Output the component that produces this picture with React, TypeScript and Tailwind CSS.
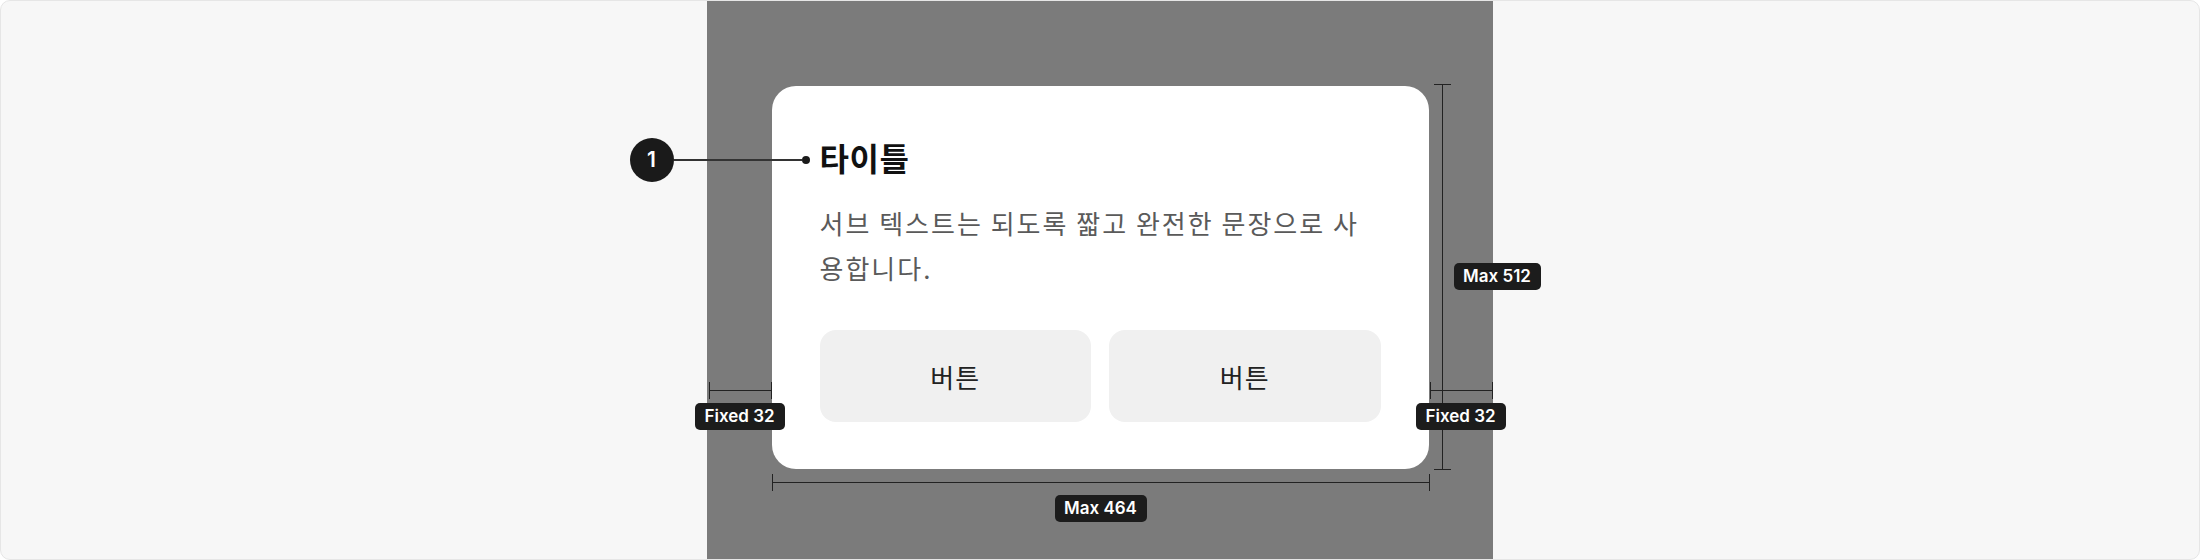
import type { ReactNode } from "react";

/* ------------------------------------------------------------------ */
/* SPEC PIECES                                                         */
/* ------------------------------------------------------------------ */

function SpecLabel({ children, className }: { children: ReactNode; className: string }) {
  return (
    <div
      className={`absolute flex items-center justify-center rounded-[5px] bg-[#1c1c1c] text-[17px] font-semibold leading-none text-white font-['Inter',sans-serif] ${className}`}
    >
      {children}
    </div>
  );
}

// horizontal dimension line with end caps
function HRule({ className }: { className: string }) {
  return (
    <div className={`absolute flex h-[17px] items-center ${className}`}>
      <div className="h-full w-px bg-[#222]" />
      <div className="h-px flex-1 bg-[#222]" />
      <div className="h-full w-px bg-[#222]" />
    </div>
  );
}

// vertical dimension line with end caps
function VRule({ className }: { className: string }) {
  return (
    <div className={`absolute flex w-[17px] flex-col items-center ${className}`}>
      <div className="h-px w-full bg-[#222]" />
      <div className="w-px flex-1 bg-[#222]" />
      <div className="h-px w-full bg-[#222]" />
    </div>
  );
}

/* ------------------------------------------------------------------ */
/* PAGE                                                                */
/* ------------------------------------------------------------------ */

export default function App() {
  return (
    <div className="flex h-[560px] w-[2200px] justify-center overflow-hidden rounded-[10px] border border-[#e6e6e6] bg-[#f7f7f7]">
      {/* Dimmed backdrop */}
      <div className="flex h-full w-[786px] justify-center bg-[#7b7b7b] pt-[85px]">
        {/* Dialog */}
        <div className="relative h-[383px] w-[657px] rounded-[24px] bg-white px-[48px] pt-[45px] font-['Noto_Sans_CJK_KR',sans-serif]">
          <h2 className="text-[32px] font-bold leading-[52px] tracking-[0.5px] text-[#111]">타이틀</h2>
          <p className="mt-[17px] text-[26px] leading-[45px] tracking-[2px] text-[#5a5a5a]">
            서브 텍스트는 되도록 짧고 완전한 문장으로 사용합니다.
          </p>
          <div className="mt-[40px] flex gap-[18px]">
            <button type="button" className="h-[92px] flex-1 rounded-[16px] bg-[#f0f0f0] text-[26px] tracking-[1px] text-[#222]">
              버튼
            </button>
            <button type="button" className="h-[92px] flex-1 rounded-[16px] bg-[#f0f0f0] text-[26px] tracking-[1px] text-[#222]">
              버튼
            </button>
          </div>

          {/* Callout 1 -> title */}
          <div className="absolute left-[-142px] top-[52px] flex items-center">
            <div className="flex h-[44px] w-[44px] items-center justify-center rounded-full bg-[#1a1a1a] text-[21px] font-semibold text-white font-['Inter',sans-serif]">
              1
            </div>
            <div className="h-[2px] w-[128px] bg-[#333]" />
            <div className="h-[8px] w-[8px] rounded-full bg-[#1a1a1a]" />
          </div>

          {/* Height spec */}
          <VRule className="left-[662px] top-[-2px] h-[386px]" />
          <SpecLabel className="left-[682px] top-[177px] h-[27px] w-[87px]">Max 512</SpecLabel>

          {/* Side padding specs */}
          <HRule className="left-[-63px] top-[296px] w-[63px]" />
          <SpecLabel className="left-[-77px] top-[317px] h-[27px] w-[90px]">Fixed 32</SpecLabel>
          <HRule className="left-[658px] top-[296px] w-[63px]" />
          <SpecLabel className="left-[644px] top-[317px] h-[27px] w-[90px]">Fixed 32</SpecLabel>

          {/* Width spec */}
          <HRule className="left-0 top-[388px] w-[658px]" />
          <SpecLabel className="left-[283px] top-[409px] h-[27px] w-[92px]">Max 464</SpecLabel>
        </div>
      </div>
    </div>
  );
}
